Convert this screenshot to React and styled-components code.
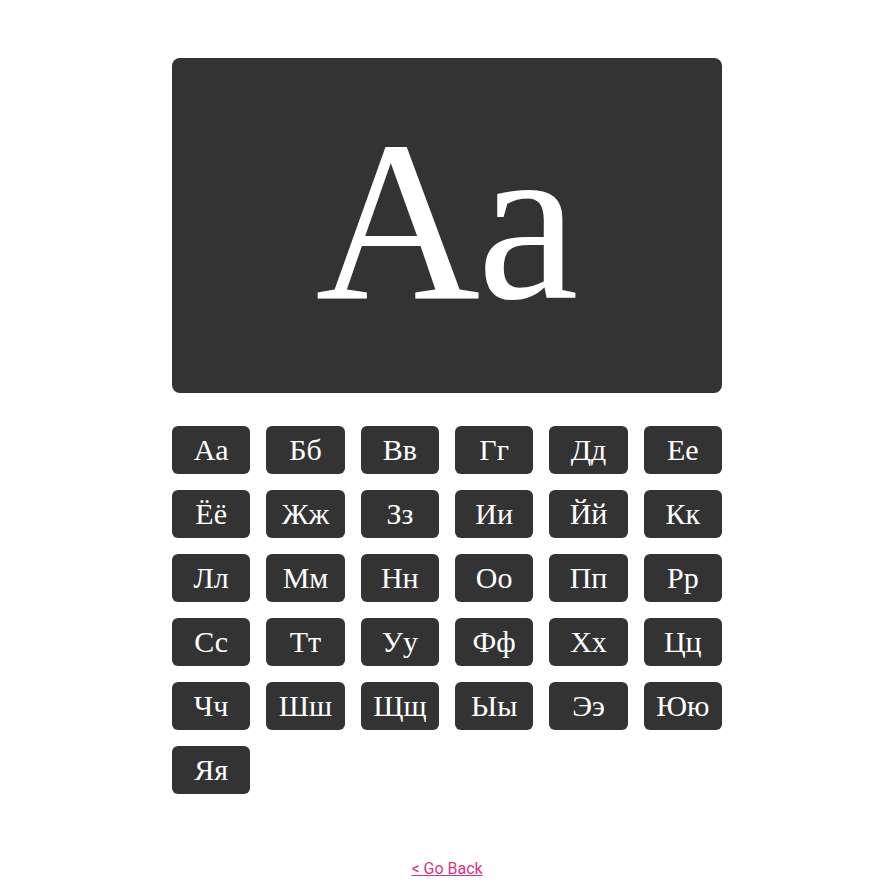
import React, { useState } from 'react';
import styled, { createGlobalStyle } from 'styled-components';

const GlobalStyle = createGlobalStyle`
    body {
        margin: 0;
        background: #fff;
        font-family: 'Liberation Serif', 'Times New Roman', serif;
    }
`;

const Page = styled.div`
    padding: 58px 0 0 6px;
    display: flex;
    flex-direction: column;
    align-items: center;
`;

const Container = styled.div`
    width: 550px;
`;

const Display = styled.div`
    height: 335px;
    padding-bottom: 10px;
    box-sizing: border-box;
    display: flex;
    justify-content: center;
    align-items: center;
    border-radius: 8px;
    background-color: #333;
    color: #fff;
    font-size: 228px;
    line-height: 1;
`;

const Grid = styled.div`
    margin-top: 33px;
    display: grid;
    grid-template-columns: repeat(6, 1fr);
    grid-column-gap: 16px;
    grid-row-gap: 16px;
`;

const Letter = styled.button`
    height: 48px;
    padding: 0;
    display: flex;
    justify-content: center;
    align-items: center;
    border: none;
    border-radius: 6px;
    background-color: #333;
    color: #fff;
    font-family: 'Liberation Serif', 'Times New Roman', serif;
    font-size: 30px;
    cursor: pointer;
`;

const Back = styled.a`
    margin-top: 65px;
    color: #d63384;
    font-family: Roboto, 'Liberation Sans', sans-serif;
    font-size: 16px;
    text-decoration: underline;
`;

const letters = [
    'Аа', 'Бб', 'Вв', 'Гг', 'Дд', 'Ее',
    'Ёё', 'Жж', 'Зз', 'Ии', 'Йй', 'Кк',
    'Лл', 'Мм', 'Нн', 'Оо', 'Пп', 'Рр',
    'Сс', 'Тт', 'Уу', 'Фф', 'Хх', 'Цц',
    'Чч', 'Шш', 'Щщ', 'Ыы', 'Ээ', 'Юю',
    'Яя',
];

const App = () => {
    const [current, setCurrent] = useState(letters[0]);

    return (
        <Page>
            <GlobalStyle />
            <Container>
                <Display>{current}</Display>
                <Grid>
                    {letters.map((elem) => (
                        <Letter key={elem} onClick={() => setCurrent(elem)}>
                            {elem}
                        </Letter>
                    ))}
                </Grid>
            </Container>
            <Back href="#">&lt; Go Back</Back>
        </Page>
    );
};

export default App;
